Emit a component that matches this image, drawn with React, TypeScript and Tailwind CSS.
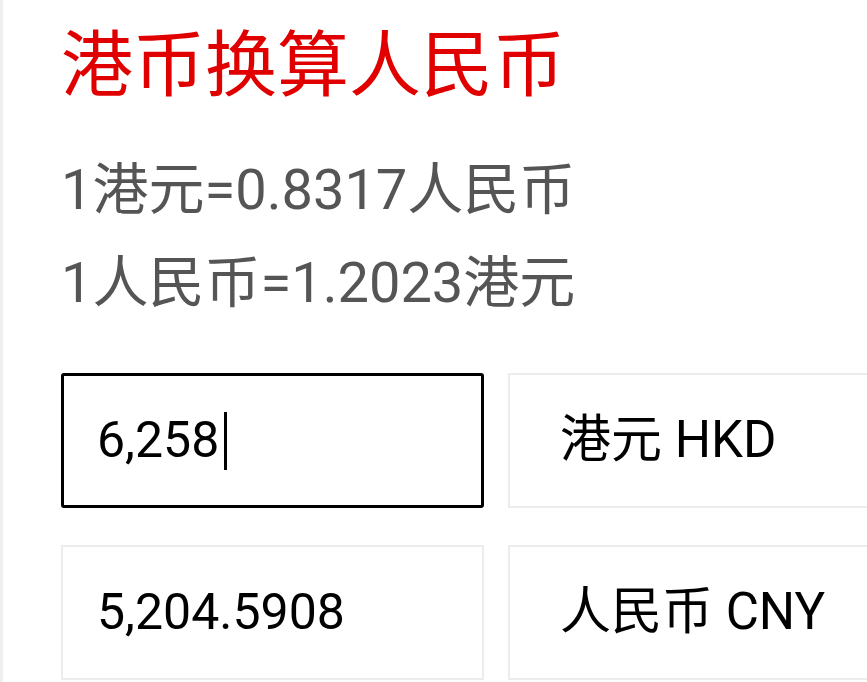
import React from 'react';

const font = { fontFamily: 'Roboto, "Noto Sans CJK SC", sans-serif' };

export default function App() {
  return (
    <div
      className="w-[867px] h-[682px] overflow-hidden bg-white border-l-[3px] border-[#efefef]"
      style={font}
    >
      <div className="pl-[58px] pt-[24px]">
        <h1 className="text-[72px] leading-[84px] text-[#e00000] font-normal">港币换算人民币</h1>

        <div className="mt-[36px] text-[56px] leading-[93px] text-[#555555]">
          <p>1港元=0.8317人民币</p>
          <p>1人民币=1.2023港元</p>
        </div>

        <div className="mt-[43px] grid grid-cols-[423px_423px] gap-x-[24px] gap-y-[37px]">
          <div className="h-[135px] flex items-center border-[3px] border-black rounded-[3px] pl-[33px] text-[50px] text-black">
            <span>6,258</span>
            <span className="ml-[5px] w-[3px] h-[58px] bg-black" />
          </div>
          <div className="h-[135px] flex items-center border-2 border-[#ececec] pl-[50px] text-[51px] text-black">
            港元 HKD
          </div>
          <div className="h-[135px] flex items-center border-2 border-[#ececec] pl-[34px] text-[50px] text-black">
            5,204.5908
          </div>
          <div className="h-[135px] flex items-center border-2 border-[#ececec] pl-[50px] text-[51px] text-black">
            人民币 CNY
          </div>
        </div>
      </div>
    </div>
  );
}
